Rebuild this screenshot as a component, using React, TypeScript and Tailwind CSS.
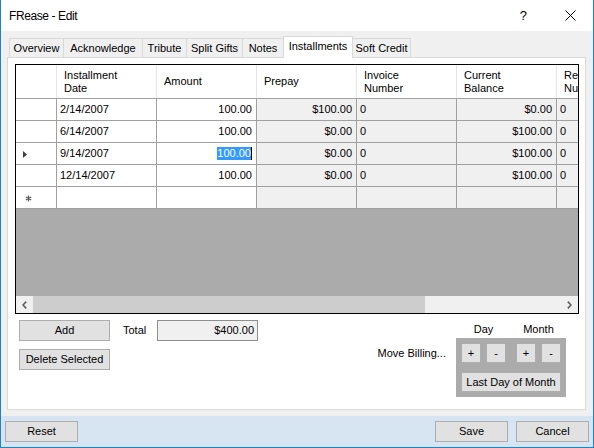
import React from "react";

const rows = [
  ["2/14/2007", "100.00", "$100.00", "0", "$0.00", "0"],
  ["6/14/2007", "100.00", "$0.00", "0", "$100.00", "0"],
  ["9/14/2007", "100.00", "$0.00", "0", "$100.00", "0"],
  ["12/14/2007", "100.00", "$0.00", "0", "$100.00", "0"],
];

const tabs = [
  { t: "Overview", w: "w-[55px]" },
  { t: "Acknowledge", w: "w-[80px]" },
  { t: "Tribute", w: "w-[45px]" },
  { t: "Split Gifts", w: "w-[57px]" },
  { t: "Notes", w: "w-[42px]" },
  { t: "Installments", w: "w-[70px]", sel: true },
  { t: "Soft Credit", w: "w-[59px]" },
];

function Btn({ className, children }: { className: string; children: React.ReactNode }) {
  return (
    <div
      className={
        "flex items-center justify-center border border-[#adadad] bg-[#e1e1e1] text-[11px] leading-[13px] text-black whitespace-nowrap " +
        className
      }
    >
      {children}
    </div>
  );
}

function HeaderCell({ children, last }: { children?: React.ReactNode; last?: boolean }) {
  return (
    <div
      className={
        last
          ? "w-[21px] shrink-0 overflow-hidden whitespace-nowrap pl-[7px] flex items-center leading-[13px]"
          : "w-[100px] shrink-0 border-r border-[#e5e5e5] pl-[7px] flex items-center leading-[13px]"
      }
    >
      <div>{children}</div>
    </div>
  );
}

export default function App() {
  return (
    <div className="w-[594px] h-[448px] flex flex-col border-l border-r border-b border-[#1883d7] font-['Liberation_Sans',Arial,sans-serif] text-[11px] text-black overflow-hidden">
      {/* Title bar */}
      <div className="h-[31px] shrink-0 bg-white flex items-center pl-[8px] pr-[17px]">
        <span className="text-[12px] tracking-[-0.4px]">FRease - Edit</span>
        <span className="ml-auto text-[13px] mr-[38px]">?</span>
        <svg width="11" height="11" viewBox="0 0 11 11">
          <path d="M0.5 0.5 L10.5 10.5 M10.5 0.5 L0.5 10.5" stroke="#000" strokeWidth="1" />
        </svg>
      </div>

      {/* Body */}
      <div className="flex-1 bg-[#f0f0f0] flex flex-col">
        {/* Tabs */}
        <div className="h-[26px] shrink-0 flex items-end pl-[8px]">
          {tabs.map((tab, i) => (
            <div
              key={tab.t}
              className={
                (tab.sel
                  ? "relative z-10 h-[22px] mb-[-1px] bg-white pb-[2px] "
                  : "h-[19px] bg-[#f0f0f0] ") +
                (i > 0 ? "-ml-px " : "") +
                tab.w +
                " shrink-0 border-t border-l border-r border-[#d9d9d9] flex items-center justify-center whitespace-nowrap leading-[13px]"
              }
            >
              {tab.t}
            </div>
          ))}
        </div>

        {/* Panel */}
        <div className="ml-[6px] w-[579px] h-[353px] shrink-0 border border-[#d9d9d9] bg-white pt-[6px] pl-[7px] flex flex-col">
          {/* Grid */}
          <div className="w-[564px] h-[250px] shrink-0 border border-black bg-[#ababab] flex flex-col overflow-hidden">
            {/* header */}
            <div className="h-[34px] shrink-0 flex bg-white border-b border-[#a0a0a0]">
              <div className="w-[41px] shrink-0 border-r border-[#e5e5e5]" />
              <HeaderCell>
                Installment
                <br />
                Date
              </HeaderCell>
              <HeaderCell>Amount</HeaderCell>
              <HeaderCell>Prepay</HeaderCell>
              <HeaderCell>
                Invoice
                <br />
                Number
              </HeaderCell>
              <HeaderCell>
                Current
                <br />
                Balance
              </HeaderCell>
              <HeaderCell last>
                Receipt
                <br />
                Number
              </HeaderCell>
            </div>

            {rows.map((r, ri) => (
              <div key={ri} className="h-[22px] shrink-0 flex border-b border-[#a0a0a0] leading-[13px]">
                <div className="w-[41px] shrink-0 border-r border-[#a0a0a0] bg-white flex items-center pl-[7px]">
                  {ri === 2 && (
                    <svg width="4" height="7" viewBox="0 0 4 7" className="mt-[1px]">
                      <path d="M0 0 L4 3.5 L0 7 Z" fill="#404040" />
                    </svg>
                  )}
                </div>
                <div className="w-[100px] shrink-0 border-r border-[#a0a0a0] bg-white flex items-center pl-[3px]">
                  {r[0]}
                </div>
                <div className="w-[100px] shrink-0 border-r border-[#a0a0a0] bg-white flex items-center justify-end pr-[4px]">
                  {ri === 2 ? (
                    <span className="bg-[#3399ff] text-white border-r border-black leading-[13px]">{r[1]}</span>
                  ) : (
                    r[1]
                  )}
                </div>
                <div className="w-[100px] shrink-0 border-r border-[#a0a0a0] bg-[#f0f0f0] flex items-center justify-end pr-[4px]">
                  {r[2]}
                </div>
                <div className="w-[100px] shrink-0 border-r border-[#a0a0a0] bg-[#f0f0f0] flex items-center pl-[3px]">
                  {r[3]}
                </div>
                <div className="w-[100px] shrink-0 border-r border-[#a0a0a0] bg-[#f0f0f0] flex items-center justify-end pr-[4px]">
                  {r[4]}
                </div>
                <div className="w-[21px] shrink-0 bg-[#f0f0f0] flex items-center pl-[3px]">{r[5]}</div>
              </div>
            ))}

            {/* new row */}
            <div className="h-[22px] shrink-0 flex border-b border-[#a0a0a0]">
              <div className="w-[41px] shrink-0 border-r border-[#a0a0a0] bg-white flex items-center pl-[9px]">
                <svg width="7" height="7" viewBox="0 0 7 7" className="mt-[1px]">
                  <path d="M3.5 0.5 V6.5 M0.8 2 L6.2 5 M6.2 2 L0.8 5" stroke="#555" strokeWidth="1.2" />
                </svg>
              </div>
              <div className="w-[100px] shrink-0 border-r border-[#a0a0a0] bg-white" />
              <div className="w-[100px] shrink-0 border-r border-[#a0a0a0] bg-white" />
              <div className="w-[100px] shrink-0 border-r border-[#a0a0a0] bg-[#f0f0f0]" />
              <div className="w-[100px] shrink-0 border-r border-[#a0a0a0] bg-[#f0f0f0]" />
              <div className="w-[100px] shrink-0 border-r border-[#a0a0a0] bg-[#f0f0f0]" />
              <div className="w-[21px] shrink-0 bg-[#f0f0f0]" />
            </div>

            <div className="flex-1" />

            {/* horizontal scrollbar */}
            <div className="h-[17px] shrink-0 flex bg-[#f0f0f0]">
              <div className="w-[17px] shrink-0 flex items-center justify-center">
                <svg width="5" height="8" viewBox="0 0 5 8">
                  <path d="M4.2 0.6 L1 4 L4.2 7.4" stroke="#606060" strokeWidth="1.6" fill="none" />
                </svg>
              </div>
              <div className="w-[392px] shrink-0 bg-[#cdcdcd]" />
              <div className="flex-1" />
              <div className="w-[17px] shrink-0 flex items-center justify-center">
                <svg width="5" height="8" viewBox="0 0 5 8">
                  <path d="M0.8 0.6 L4 4 L0.8 7.4" stroke="#606060" strokeWidth="1.6" fill="none" />
                </svg>
              </div>
            </div>
          </div>

          {/* Below grid */}
          <div className="flex">
            <div className="flex flex-col pl-[4px] pt-[6px] gap-[8px]">
              <div className="flex items-center">
                <Btn className="w-[91px] h-[21px]">Add</Btn>
                <span className="ml-[13px] w-[34px] leading-[13px]">Total</span>
                <div className="w-[101px] h-[21px] border border-[#8f8f8f] bg-[#f0f0f0] flex items-center justify-end pr-[3px] leading-[13px]">
                  $400.00
                </div>
              </div>
              <Btn className="w-[91px] h-[21px]">Delete Selected</Btn>
            </div>

            <div className="ml-auto flex pr-[19px]">
              <span className="mt-[33px] mr-[10px] leading-[13px] whitespace-nowrap">Move Billing...</span>
              <div className="flex flex-col w-[110px] pt-[9px]">
                <div className="flex pl-[5px] leading-[13px]">
                  <span className="w-[45px] text-center">Day</span>
                  <span className="ml-[10px] w-[45px] text-center">Month</span>
                </div>
                <div className="mt-[2px] bg-[#ababab] p-[5px] flex flex-col gap-[9px]">
                  <div className="flex">
                    <Btn className="w-[20px] h-[20px]">+</Btn>
                    <Btn className="ml-[5px] w-[20px] h-[20px]">-</Btn>
                    <Btn className="ml-[10px] w-[20px] h-[20px]">+</Btn>
                    <Btn className="ml-[5px] w-[20px] h-[20px]">-</Btn>
                  </div>
                  <Btn className="w-[100px] h-[20px]">Last Day of Month</Btn>
                </div>
              </div>
            </div>
          </div>
        </div>

        <div className="flex-1" />

        {/* Footer */}
        <div className="h-[31px] shrink-0 bg-[#d7e4f2] flex items-start pt-[5px] pl-[4px] pr-[4px]">
          <Btn className="w-[73px] h-[21px]">Reset</Btn>
          <Btn className="ml-auto w-[73px] h-[21px]">Save</Btn>
          <Btn className="ml-[8px] w-[73px] h-[21px]">Cancel</Btn>
        </div>
      </div>
    </div>
  );
}
